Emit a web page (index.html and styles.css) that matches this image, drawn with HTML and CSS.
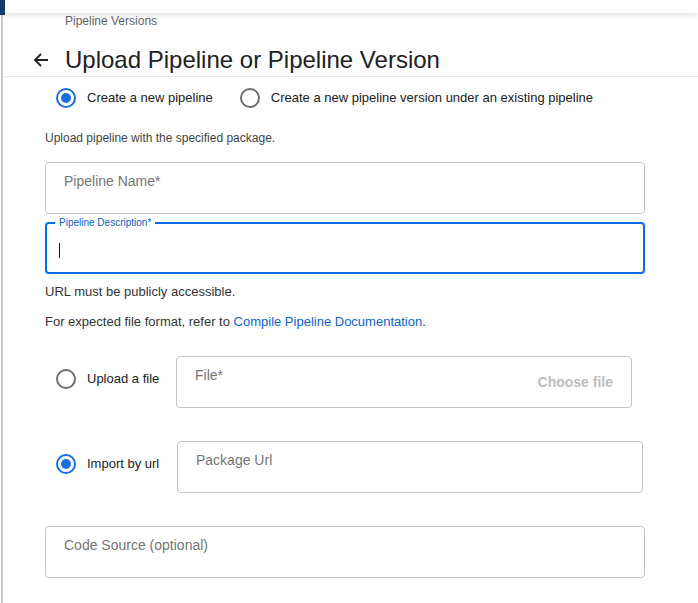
FILE: index.html
```html
<!DOCTYPE html>
<html lang="en">
<head>
  <meta charset="UTF-8" />
  <meta name="viewport" content="width=device-width, initial-scale=1.0" />
  <title>Upload Pipeline</title>
  <link rel="stylesheet" href="styles.css">
</head>
<body>
  <div class="topbar"><div class="brand"></div></div>

  <div class="page">
    <div class="header">
      <div class="crumb">Pipeline Versions</div>
      <div class="title-row">
        <svg class="back" width="16" height="16" viewBox="0 0 16 16">
          <path d="M15 8H2.5M8 2L2 8l6 6" fill="none" stroke="#202124" stroke-width="1.8"/>
        </svg>
        <h1>Upload Pipeline or Pipeline Version</h1>
      </div>
    </div>

    <div class="form">
      <div class="choice-row">
        <label class="radio checked"><span class="dot"></span>Create a new pipeline</label>
        <label class="radio"><span class="dot"></span>Create a new pipeline version under an existing pipeline</label>
      </div>

      <p class="hint">Upload pipeline with the specified package.</p>

      <div class="field"><span class="placeholder">Pipeline Name*</span></div>
      <div class="field focused">
        <span class="float-label">Pipeline Description*</span>
        <span class="caret"></span>
      </div>

      <p class="note first">URL must be publicly accessible.</p>
      <p class="note second">For expected file format, refer to <a href="#">Compile Pipeline Documentation</a>.</p>

      <div class="source-row file-row">
        <label class="radio"><span class="dot"></span>Upload a file</label>
        <div class="field file-field">
          <span class="placeholder">File*</span>
          <span class="choose">Choose file</span>
        </div>
      </div>

      <div class="source-row url-row">
        <label class="radio checked"><span class="dot"></span>Import by url</label>
        <div class="field url-field"><span class="placeholder">Package Url</span></div>
      </div>

      <div class="field code-field"><span class="placeholder">Code Source (optional)</span></div>
    </div>
  </div>
</body>
</html>
```

FILE: styles.css
```css
/* Base */
body {
  margin: 0;
  font-family: 'Liberation Sans', Arial, Helvetica, sans-serif;
  color: #202124;
  background: #fff;
  height: 603px;
  overflow: hidden;
}
/* Top bar with a little shadow */
.topbar {
  position: relative;
  z-index: 2;
  height: 13px;
  background: #fff;
  box-shadow: 0 2px 6px rgba(0, 0, 0, 0.12);
}
.brand {
  width: 5px;
  height: 15px;
  background: #0f3c68;
}
.page {
  margin-left: 1px;
  border-left: 2px solid #c8c8c8;
  height: 590px;
}
/* Header */
.header {
  border-bottom: 1px solid #e6e6e6;
  margin-left: 2px;
}
.crumb {
  font-size: 12px;
  line-height: 16px;
  color: #5f6368;
  padding-left: 60px;
}
.title-row {
  display: flex;
  align-items: center;
  height: 32px;
  margin-top: 15px;
}
.back {
  margin-left: 28px;
  margin-right: 16px;
}
h1 {
  margin: 0;
  font-size: 24px;
  font-weight: 400;
  color: #202124;
}
/* Form */
.form {
  padding-left: 42px;
  width: 600px;
}
.choice-row {
  display: flex;
  padding-top: 11px;
  padding-left: 11px;
  gap: 27px;
}
.radio {
  display: flex;
  align-items: center;
  font-size: 13px;
  line-height: 20px;
  color: #202124;
  white-space: nowrap;
}
.dot {
  width: 20px;
  height: 20px;
  box-sizing: border-box;
  border: 2px solid #6e6e6e;
  border-radius: 50%;
  margin-right: 11px;
  display: flex;
  align-items: center;
  justify-content: center;
}
.radio.checked .dot {
  border-color: #1a6fe0;
}
.radio.checked .dot::after {
  content: "";
  width: 10px;
  height: 10px;
  border-radius: 50%;
  background: #1a6fe0;
}
.hint {
  margin: 22px 0 0;
  font-size: 12px;
  line-height: 16px;
  color: #444;
}
/* Text fields */
.field {
  position: relative;
  box-sizing: border-box;
  height: 52px;
  border: 1px solid #c4c4c4;
  border-radius: 4px;
  padding: 9px 18px 0;
  margin-top: 16px;
}
.placeholder {
  font-size: 14px;
  line-height: 16px;
  color: #757575;
}
.field.focused {
  margin-top: 8px;
  border: 2px solid #0a6be6;
  padding: 19px 12px 0;
}
.float-label {
  position: absolute;
  top: -8px;
  left: 8px;
  padding: 0 4px;
  background: #fff;
  font-size: 10px;
  line-height: 14px;
  color: #0a5fcc;
}
.caret {
  display: block;
  width: 1px;
  height: 15px;
  background: #111;
}
.note {
  margin: 0;
  font-size: 13px;
  line-height: 16px;
  color: #333;
}
.note.first {
  margin-top: 10px;
}
.note.second {
  margin-top: 14px;
}
.note a {
  color: #0b63ce;
  text-decoration: none;
}
/* File / url source rows */
.source-row {
  display: flex;
  align-items: flex-start;
  padding-left: 11px;
}
.source-row .radio {
  margin-top: 13px;
  width: 104px;
}
.source-row .field {
  margin-top: 0;
  margin-left: 16px;
  flex: none;
}
.file-row {
  margin-top: 26px;
}
.url-row {
  margin-top: 33px;
}
.file-field {
  width: 456px;
}
.url-row .radio {
  width: 105px;
}
.url-field {
  width: 466px;
}
.choose {
  position: absolute;
  right: 18px;
  top: 17px;
  font-size: 14px;
  font-weight: 700;
  color: #bdbdbd;
}
.code-field {
  margin-top: 33px !important;
}
```
